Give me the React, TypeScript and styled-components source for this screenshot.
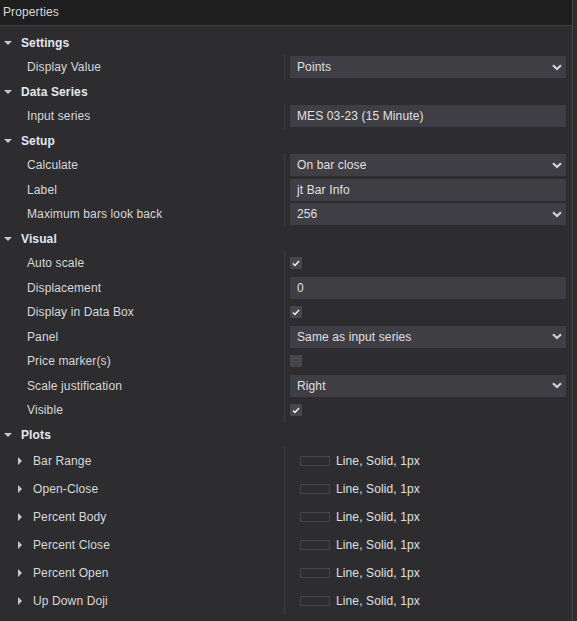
import React from 'react';
import styled, {createGlobalStyle} from "styled-components";

const GlobalStyle = createGlobalStyle`
  html, body {
    margin: 0;
    padding: 0;
    background: #2d2d30;
  }
  body {
    font-family: "Liberation Sans", Arial, sans-serif;
    font-size: 12px;
    letter-spacing: 0.12px;
    color: #d6d6d6;
  }
`

type Value =
    | { kind: 'select', text: string }
    | { kind: 'text', text: string }
    | { kind: 'check', checked: boolean }
    | { kind: 'plot', text: string }

type PropertyType = {
    label: string
    value: Value
}

type CategoryType = {
    title: string
    plots?: boolean
    items: Array<PropertyType>
}

const categories: Array<CategoryType> = [
    {
        title: 'Settings',
        items: [{label: 'Display Value', value: {kind: 'select', text: 'Points'}}]
    },
    {
        title: 'Data Series',
        items: [{label: 'Input series', value: {kind: 'text', text: 'MES 03-23 (15 Minute)'}}]
    },
    {
        title: 'Setup',
        items: [
            {label: 'Calculate', value: {kind: 'select', text: 'On bar close'}},
            {label: 'Label', value: {kind: 'text', text: 'jt Bar Info'}},
            {label: 'Maximum bars look back', value: {kind: 'select', text: '256'}},
        ]
    },
    {
        title: 'Visual',
        items: [
            {label: 'Auto scale', value: {kind: 'check', checked: true}},
            {label: 'Displacement', value: {kind: 'text', text: '0'}},
            {label: 'Display in Data Box', value: {kind: 'check', checked: true}},
            {label: 'Panel', value: {kind: 'select', text: 'Same as input series'}},
            {label: 'Price marker(s)', value: {kind: 'check', checked: false}},
            {label: 'Scale justification', value: {kind: 'select', text: 'Right'}},
            {label: 'Visible', value: {kind: 'check', checked: true}},
        ]
    },
    {
        title: 'Plots',
        plots: true,
        items: ['Bar Range', 'Open-Close', 'Percent Body', 'Percent Close', 'Percent Open', 'Up Down Doji']
            .map(label => ({label, value: {kind: 'plot', text: 'Line, Solid, 1px'} as Value}))
    },
]

const Chevron = () => (
    <svg width="10" height="7" viewBox="0 0 10 7">
        <polyline points="1,1.2 5,5 9,1.2" fill="none" stroke="#d2d2d2" strokeWidth="2.2"/>
    </svg>
)

const Check = () => (
    <svg width="8" height="7" viewBox="0 0 8 7">
        <polyline points="1,3.5 3,5.5 7,1" fill="none" stroke="#f0f0f0" strokeWidth="1.5"/>
    </svg>
)

const ValueCell = ({value}: { value: Value }) => {
    switch (value.kind) {
        case 'select':
            return (
                <Field>
                    <FieldText>{value.text}</FieldText>
                    <Chevron/>
                </Field>
            )
        case 'text':
            return <Field><FieldText>{value.text}</FieldText></Field>
        case 'check':
            return <CheckBox>{value.checked && <Check/>}</CheckBox>
        case 'plot':
            return (
                <PlotValue>
                    <Swatch/>
                    <span>{value.text}</span>
                </PlotValue>
            )
    }
}

export default function App() {
    return (
        <>
            <GlobalStyle/>
            <Panel>
                <Header>Properties</Header>
                <Body>
                    {categories.map(cat => (
                        <section key={cat.title}>
                            <CategoryRow>
                                <DownArrow/>
                                <CategoryTitle>{cat.title}</CategoryTitle>
                            </CategoryRow>
                            {cat.items.map(item => (
                                <Row key={item.label} tall={cat.plots}>
                                    <Label indent={cat.plots ? 18 : 27}>
                                        {cat.plots && <RightArrow/>}
                                        {item.label}
                                    </Label>
                                    <Cell>
                                        <ValueCell value={item.value}/>
                                    </Cell>
                                </Row>
                            ))}
                        </section>
                    ))}
                </Body>
            </Panel>
        </>
    );
}

const Panel = styled.div`
  width: 572px;
  min-height: 621px;
  border-right: 1px solid #46464a;
  background: #2d2d30;
`

const Header = styled.div`
  height: 25px;
  line-height: 24px;
  padding-left: 3px;
  background: #1e1e1e;
  border-bottom: 1px solid #414143;
  color: #d8d8d8;
  font-size: 12px;
`

const Body = styled.div`
  padding-top: 4.6px;
`

const CategoryRow = styled.div`
  height: 24.5px;
  display: flex;
  align-items: center;
  padding-left: 4px;
`

const DownArrow = styled.span`
  width: 0;
  height: 0;
  border-left: 4px solid transparent;
  border-right: 4px solid transparent;
  border-top: 4px solid #c8c8c8;
  margin-top: 1px;
`

const RightArrow = styled.span`
  width: 0;
  height: 0;
  border-top: 4px solid transparent;
  border-bottom: 4px solid transparent;
  border-left: 4px solid #c8c8c8;
  margin-right: 11px;
`

const CategoryTitle = styled.span`
  margin-left: 9px;
  font-weight: bold;
  color: #e4e8ee;
`

const Row = styled.div<{ tall?: boolean }>`
  display: grid;
  grid-template-columns: 284px 1fr;
  height: ${props => props.tall ? '28px' : '24.5px'};
`

const Label = styled.div<{ indent: number }>`
  display: flex;
  align-items: center;
  padding-left: ${props => props.indent}px;
  color: #d8d8d8;
  white-space: nowrap;
`

const Cell = styled.div`
  display: flex;
  align-items: center;
  border-left: 1px solid #3e3e41;
  padding-left: 5px;
  padding-right: 6px;
`

const Field = styled.div`
  flex: 1;
  height: 22px;
  display: flex;
  align-items: center;
  justify-content: space-between;
  padding: 0 4px 0 7px;
  background: #3f3e44;
  color: #e0e0e0;
`

const FieldText = styled.span`
  white-space: nowrap;
`

const CheckBox = styled.div`
  width: 12px;
  height: 12px;
  display: flex;
  align-items: center;
  justify-content: center;
  background: #47464c;
`

const PlotValue = styled.div`
  display: flex;
  align-items: center;
  gap: 6px;
  padding-left: 10px;
  color: #e0e0e0;
`

const Swatch = styled.span`
  width: 28px;
  height: 8px;
  border: 1px solid #46464a;
`
